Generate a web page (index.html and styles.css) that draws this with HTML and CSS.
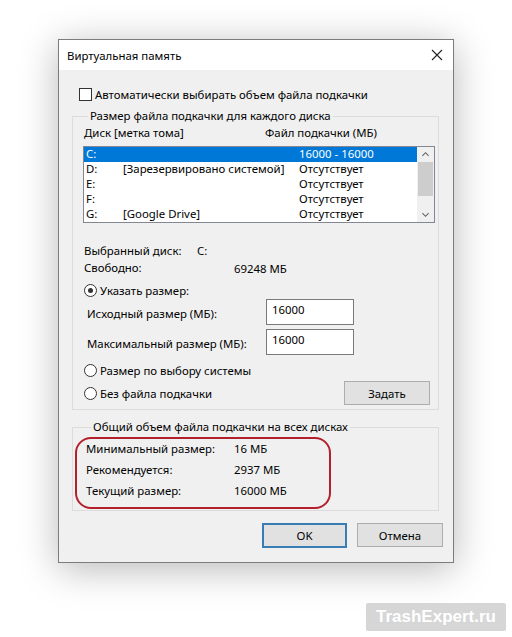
FILE: index.html
```html
<!doctype html>
<html lang="ru">
<head>
    <meta charset="UTF-8">
    <title>Виртуальная память</title>
    <link rel="stylesheet" href="styles.css">
</head>
<body>
    <div class="window">
        <div class="titlebar">
            <span class="title">Виртуальная память</span>
            <svg class="close" width="12" height="12" viewBox="0 0 12 12"><path d="M1 1L11 11M11 1L1 11" stroke="#222" stroke-width="1.1" fill="none"/></svg>
        </div>
        <div class="content">
            <label class="check"><span class="checkbox"></span>Автоматически выбирать объем файла подкачки</label>

            <fieldset class="group group-disks">
                <legend>Размер файла подкачки для каждого диска</legend>
                <div class="list-head">
                    <span>Диск [метка тома]</span>
                    <span>Файл подкачки (МБ)</span>
                </div>
                <div class="listbox">
                    <div class="rows">
                        <div class="row selected"><span>C:</span><span></span><span>16000 - 16000</span></div>
                        <div class="row"><span>D:</span><span>[Зарезервировано системой]</span><span>Отсутствует</span></div>
                        <div class="row"><span>E:</span><span></span><span>Отсутствует</span></div>
                        <div class="row"><span>F:</span><span></span><span>Отсутствует</span></div>
                        <div class="row"><span>G:</span><span>[Google Drive]</span><span>Отсутствует</span></div>
                    </div>
                    <div class="scrollbar">
                        <svg class="arrow" width="17" height="17" viewBox="0 0 17 17"><path d="M5 10L8.5 6.5L12 10" stroke="#606060" stroke-width="1.2" fill="none"/></svg>
                        <div class="thumb"></div>
                        <div class="track"></div>
                        <svg class="arrow" width="17" height="17" viewBox="0 0 17 17"><path d="M5 7L8.5 10.5L12 7" stroke="#606060" stroke-width="1.2" fill="none"/></svg>
                    </div>
                </div>

                <div class="drive-info">
                    <span>Выбранный диск:</span><span class="drive-letter">C:</span>
                    <span>Свободно:</span><span class="free">69248 МБ</span>
                </div>

                <label class="radio"><span class="dot checked"></span>Указать размер:</label>
                <div class="size-row first">
                    <span>Исходный размер (МБ):</span>
                    <div class="input">16000</div>
                </div>
                <div class="size-row">
                    <span>Максимальный размер (МБ):</span>
                    <div class="input">16000</div>
                </div>
                <label class="radio system"><span class="dot"></span>Размер по выбору системы</label>
                <div class="last-row">
                    <label class="radio"><span class="dot"></span>Без файла подкачки</label>
                    <button class="btn set">Задать</button>
                </div>
            </fieldset>

            <fieldset class="group group-total">
                <legend>Общий объем файла подкачки на всех дисках</legend>
                <div class="totals">
                    <span>Минимальный размер:</span><span>16 МБ</span>
                    <span>Рекомендуется:</span><span>2937 МБ</span>
                    <span>Текущий размер:</span><span>16000 МБ</span>
                </div>
                <div class="highlight"></div>
            </fieldset>

            <div class="buttons">
                <button class="btn ok">OK</button>
                <button class="btn">Отмена</button>
            </div>
        </div>
    </div>
    <div class="watermark">TrashExpert.ru</div>
</body>
</html>
```

FILE: styles.css
```css
body{
    margin:0;
    background:#fff;
    font-family:"Noto Sans","Open Sans",sans-serif;
    font-size:11.4px;
    color:#000;
    width:512px;
    height:637px;
    position:relative;
    overflow:hidden;
}
.window{
    width:394px;
    margin:39px 0 0 58px;
    border:1px solid #7c7c7c;
    background:#f0f0f0;
    box-shadow:0 6px 36px rgba(0,0,0,0.28);
}
.titlebar{
    height:30px;
    background:#fff;
    display:flex;
    align-items:center;
    justify-content:space-between;
    padding:0 10px 0 8px;
}
.close{
    display:block;
}
.content{
    padding:18px 14px 14px 13px;
}
.check{
    display:flex;
    align-items:center;
    height:13px;
    margin-left:7px;
    gap:3px;
}
.checkbox{
    width:11px;
    height:11px;
    border:1px solid #333;
    background:#fff;
}
.group{
    margin:7px 0 0;
    padding:1px 3px 4px 10px;
    border:1px solid #dcdcdc;
    min-width:0;
}
.group legend{
    padding:0 2px;
    margin-left:5px;
    line-height:16px;
}
.list-head{
    display:flex;
    height:16px;
    line-height:16px;
    padding-left:1px;
}
.list-head span:first-child{
    width:181px;
}
.listbox{
    margin-top:5px;
    border:1px solid #828790;
    background:#fff;
    display:flex;
    height:75px;
}
.rows{
    flex:1;
}
.row{
    display:grid;
    grid-template-columns:37px 176px 1fr;
    height:15px;
    line-height:14px;
    padding-left:2px;
}
.row.selected{
    background:#0078d7;
    color:#fff;
}
.scrollbar{
    width:17px;
    background:#f0f0f0;
    display:flex;
    flex-direction:column;
}
.arrow{
    display:block;
    height:15px;
}
.thumb{
    height:34px;
    margin:0 1px;
    background:#cdcdcd;
}
.track{
    flex:1;
}
.drive-info{
    display:grid;
    grid-template-columns:113px 1fr;
    margin-top:19px;
    line-height:17px;
    padding-left:1px;
}
.drive-info .free{
    margin-left:37px;
    padding-top:3px;
    line-height:14px;
}
.radio{
    display:flex;
    align-items:center;
    gap:3px;
    height:16px;
    padding-left:1px;
}
.drive-info + .radio{
    margin-top:6px;
}
.dot{
    width:11px;
    height:11px;
    border:1px solid #333;
    border-radius:50%;
    background:#fff;
    position:relative;
}
.dot.checked::after{
    content:"";
    position:absolute;
    left:3px;
    top:3px;
    width:5px;
    height:5px;
    border-radius:50%;
    background:#333;
}
.size-row{
    display:flex;
    align-items:center;
    margin-top:4px;
    padding-left:4px;
}
.size-row.first{
    margin-top:1px;
}
.size-row span{
    width:179px;
    padding-top:2px;
}
.input{
    width:76px;
    height:20px;
    border:1px solid #7a7a7a;
    background:#fff;
    padding:1px 5px 3px;
    line-height:18px;
}
.radio.system{
    margin-top:7px;
}
.last-row{
    display:flex;
    justify-content:space-between;
    align-items:center;
    margin-top:4px;
    padding-right:5px;
}
.btn{
    font-family:inherit;
    font-size:11.4px;
    color:#000;
    background:#e1e1e1;
    border:1px solid #adadad;
    padding:0;
    width:86px;
    height:24px;
}
.btn.set{
    margin-top:-1px;
}
.group-total{
    margin-top:9px;
    padding:3px 3px 9px 13px;
    position:relative;
}
.totals{
    display:grid;
    grid-template-columns:148px 1fr;
    line-height:21px;
}
.highlight{
    position:absolute;
    left:2px;
    top:2px;
    width:252px;
    height:68px;
    border:2.5px solid #b3202c;
    border-radius:16px;
}
.buttons{
    display:flex;
    justify-content:flex-end;
    gap:10px;
    margin:12px -4px 0 0;
}
.btn.ok{
    width:85px;
    height:25px;
    border:2px solid #3a7db5;
}
.watermark{
    position:absolute;
    left:366px;
    top:603px;
    width:140px;
    height:28px;
    background:#d6d6d6;
    border-radius:2px;
    color:#fff;
    font-family:"Liberation Sans",Arial,sans-serif;
    font-weight:bold;
    font-size:17px;
    line-height:28px;
    text-align:center;
}
```
